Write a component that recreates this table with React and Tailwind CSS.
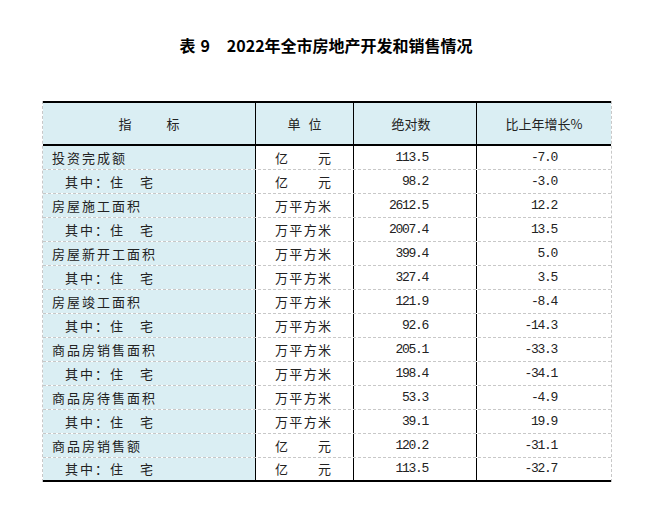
import React from "react";

const rows = [
  ["投资完成额", false, "亿元", "113.5", "-7.0"],
  ["其中：住　宅", true, "亿元", "98.2", "-3.0"],
  ["房屋施工面积", false, "万平方米", "2612.5", "12.2"],
  ["其中：住　宅", true, "万平方米", "2007.4", "13.5"],
  ["房屋新开工面积", false, "万平方米", "399.4", "5.0"],
  ["其中：住　宅", true, "万平方米", "327.4", "3.5"],
  ["房屋竣工面积", false, "万平方米", "121.9", "-8.4"],
  ["其中：住　宅", true, "万平方米", "92.6", "-14.3"],
  ["商品房销售面积", false, "万平方米", "205.1", "-33.3"],
  ["其中：住　宅", true, "万平方米", "198.4", "-34.1"],
  ["商品房待售面积", false, "万平方米", "53.3", "-4.9"],
  ["其中：住　宅", true, "万平方米", "39.1", "19.9"],
  ["商品房销售额", false, "亿元", "120.2", "-31.1"],
  ["其中：住　宅", true, "亿元", "113.5", "-32.7"],
];

const cjk = { fontFamily: '"Noto Sans CJK SC", sans-serif' };
const mono = { fontFamily: '"Liberation Mono", monospace' };

function Unit({ u }) {
  const chars = u.split("");
  return (
    <div className="w-[56px] flex justify-between">
      {chars.map((c, i) => (
        <span key={i}>{c}</span>
      ))}
    </div>
  );
}

export default function App() {
  return (
    <div className="w-[662px] h-[508px] bg-white text-[#222]" style={cjk}>
      <div className="pt-[33px] w-[570px] ml-[42px] flex justify-center">
        <div className="h-[24px] leading-[24px] text-[16px] font-bold text-black flex items-center pr-[2px]">
          <span>表</span>
          <span className="ml-[5px]">9</span>
          <span className="ml-[17px]">2022年全市房地产开发和销售情况</span>
        </div>
      </div>
      <div className="mt-[44px] ml-[42px] w-[570px] border-x border-dashed border-[#c8c8c8] text-[13px]">
        <div className="flex h-[45px] border-t-2 border-b-2 border-black bg-[#daeef3] items-center">
          <div className="w-[212px] h-full flex items-center justify-center">
            <span>指</span>
            <span className="w-[35px]" />
            <span>标</span>
          </div>
          <div className="w-[98px] h-full border-l border-black flex items-center justify-center gap-[8px]">
            <span>单</span>
            <span>位</span>
          </div>
          <div className="w-[123px] h-full border-l border-black flex items-center justify-center pr-[8px]">
            绝对数
          </div>
          <div className="flex-1 h-full border-l border-black flex items-center justify-center">
            比上年增长%
          </div>
        </div>
        {rows.map(([label, indent, unit, abs, pct], i) => (
          <div
            key={i}
            className={
              "flex h-[24px] " +
              (i === rows.length - 1
                ? "border-b-2 border-black border-solid"
                : "border-b border-dashed border-[#c8c8c8]")
            }
          >
            <div
              className={
                "w-[212px] h-full bg-[#daeef3] flex items-center tracking-[2px] " +
                (indent ? "pl-[22px]" : "pl-[9px]")
              }
            >
              {label}
            </div>
            <div className="w-[98px] h-full border-l border-black flex items-center justify-center pr-[3px]">
              <Unit u={unit} />
            </div>
            <div
              className="w-[123px] h-full border-l border-black flex items-center justify-end pr-[48px] text-[13px] tracking-[-1.3px]"
              style={mono}
            >
              {abs}
            </div>
            <div
              className="flex-1 h-full border-l border-black flex items-center justify-end pr-[54px] text-[13px] tracking-[-1.3px]"
              style={mono}
            >
              {pct}
            </div>
          </div>
        ))}
      </div>
    </div>
  );
}
